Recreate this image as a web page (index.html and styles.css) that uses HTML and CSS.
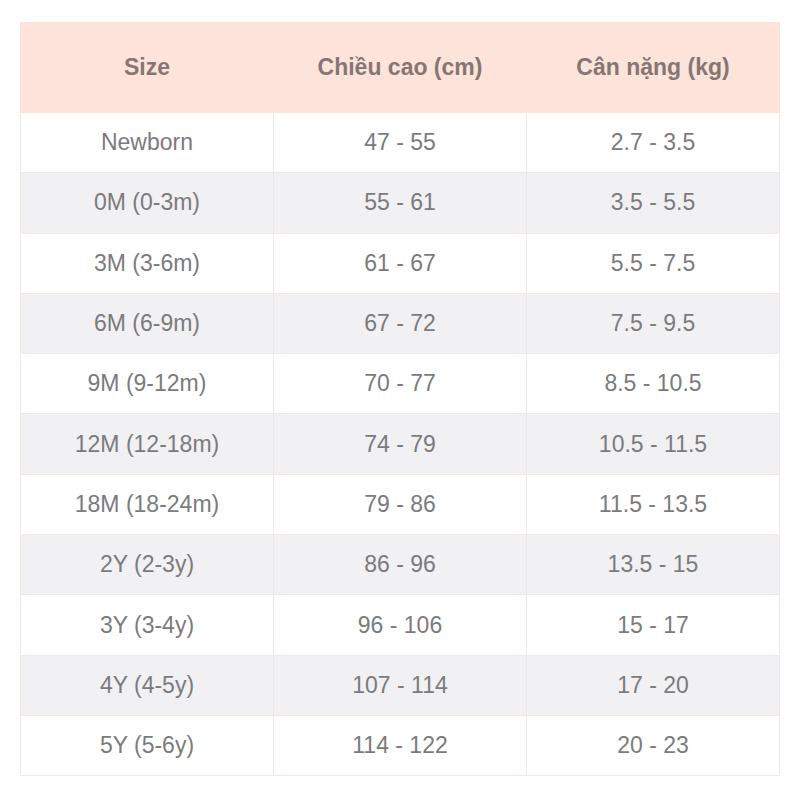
FILE: index.html
```html
<!DOCTYPE html>
<html>
<head>
<meta charset="utf-8">
<link rel="stylesheet" href="styles.css">
</head>
<body>
<table class="size-table">
  <thead>
    <tr><th>Size</th><th>Chiều cao (cm)</th><th>Cân nặng (kg)</th></tr>
  </thead>
  <tbody>
    <tr><td>Newborn</td><td>47 - 55</td><td>2.7 - 3.5</td></tr>
    <tr><td>0M (0-3m)</td><td>55 - 61</td><td>3.5 - 5.5</td></tr>
    <tr><td>3M (3-6m)</td><td>61 - 67</td><td>5.5 - 7.5</td></tr>
    <tr><td>6M (6-9m)</td><td>67 - 72</td><td>7.5 - 9.5</td></tr>
    <tr><td>9M (9-12m)</td><td>70 - 77</td><td>8.5 - 10.5</td></tr>
    <tr><td>12M (12-18m)</td><td>74 - 79</td><td>10.5 - 11.5</td></tr>
    <tr><td>18M (18-24m)</td><td>79 - 86</td><td>11.5 - 13.5</td></tr>
    <tr><td>2Y (2-3y)</td><td>86 - 96</td><td>13.5 - 15</td></tr>
    <tr><td>3Y (3-4y)</td><td>96 - 106</td><td>15 - 17</td></tr>
    <tr><td>4Y (4-5y)</td><td>107 - 114</td><td>17 - 20</td></tr>
    <tr><td>5Y (5-6y)</td><td>114 - 122</td><td>20 - 23</td></tr>
  </tbody>
</table>
</body>
</html>
```
FILE: styles.css
```css
html, body {
  margin: 0;
  padding: 0;
  background: #ffffff;
}
body {
  padding: 22px 20px 0 20px;
  font-family: "Liberation Sans", Arial, sans-serif;
}
.size-table {
  width: 760px;
  border-collapse: collapse;
  table-layout: fixed;
  font-size: 23px;
}
.size-table th {
  background: #fde3da;
  color: #857674;
  font-weight: bold;
  height: 89px;
  padding: 0;
  text-align: center;
  vertical-align: middle;
  border: 1px solid #fde3da;
}
.size-table td {
  height: 60.3px;
  padding: 0;
  color: #7b7b7d;
  text-align: center;
  vertical-align: middle;
  border: 1px solid #f3e7e3;
  box-sizing: border-box;
}
.size-table tbody tr:nth-child(even) td {
  background: #f1f0f2;
}
```
